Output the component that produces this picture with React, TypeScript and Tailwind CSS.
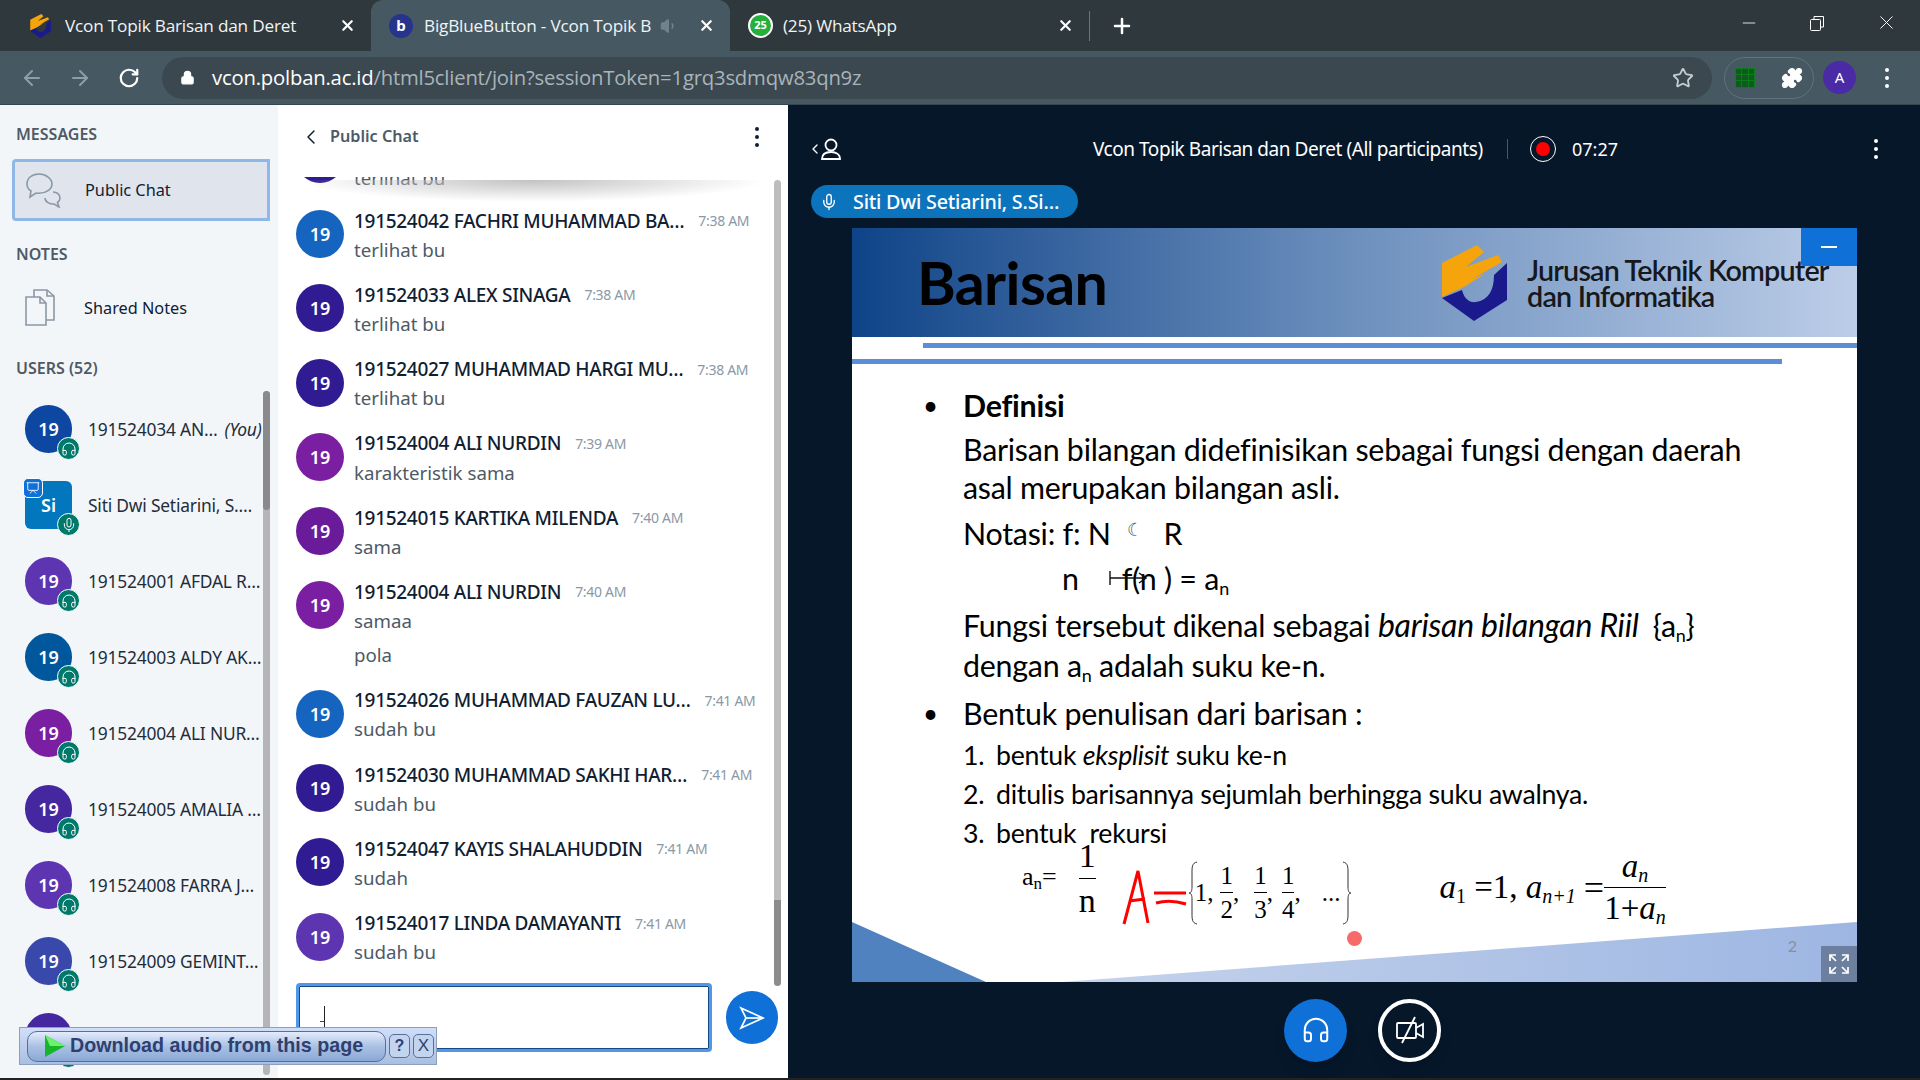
import { Headphones, Mic, Presentation, ChevronLeft, ArrowLeft, ArrowRight, RotateCw, Lock, Star, Puzzle, Plus, X, Minus, Volume1 } from "lucide-react";

const uiFont = "font-['Noto_Sans','Open_Sans',sans-serif]";

const users = [
  { name: "191524034 AN…", you: true, color: "bg-[#0d47a1]", mic: false, tag: "19" },
  { name: "Siti Dwi Setiarini, S.…", color: "bg-[#0277bd]", mic: true, tag: "Si", presenter: true },
  { name: "191524001 AFDAL R…", color: "bg-[#5e35b1]", tag: "19" },
  { name: "191524003 ALDY AK…", color: "bg-[#01579b]", tag: "19" },
  { name: "191524004 ALI NUR…", color: "bg-[#7b1fa2]", tag: "19" },
  { name: "191524005 AMALIA …", color: "bg-[#4527a0]", tag: "19" },
  { name: "191524008 FARRA J…", color: "bg-[#5e35b1]", tag: "19" },
  { name: "191524009 GEMINT…", color: "bg-[#3949ab]", tag: "19" },
  { name: "191524010 HANI…", color: "bg-[#4527a0]", tag: "19" },
];

const messages = [
  { name: "191524042 FACHRI MUHAMMAD BA…", time: "7:38 AM", color: "bg-[#1565c0]", lines: ["terlihat bu"] },
  { name: "191524033 ALEX SINAGA", time: "7:38 AM", color: "bg-[#311b92]", lines: ["terlihat bu"] },
  { name: "191524027 MUHAMMAD HARGI MU…", time: "7:38 AM", color: "bg-[#311b92]", lines: ["terlihat bu"] },
  { name: "191524004 ALI NURDIN", time: "7:39 AM", color: "bg-[#7b1fa2]", lines: ["karakteristik sama"] },
  { name: "191524015 KARTIKA MILENDA", time: "7:40 AM", color: "bg-[#6a1b9a]", lines: ["sama"] },
  { name: "191524004 ALI NURDIN", time: "7:40 AM", color: "bg-[#7b1fa2]", lines: ["samaa", "pola"] },
  { name: "191524026 MUHAMMAD FAUZAN LU…", time: "7:41 AM", color: "bg-[#1565c0]", lines: ["sudah bu"] },
  { name: "191524030 MUHAMMAD SAKHI HAR…", time: "7:41 AM", color: "bg-[#311b92]", lines: ["sudah bu"] },
  { name: "191524047 KAYIS SHALAHUDDIN", time: "7:41 AM", color: "bg-[#311b92]", lines: ["sudah"] },
  { name: "191524017 LINDA DAMAYANTI", time: "7:41 AM", color: "bg-[#5e35b1]", lines: ["sudah bu"] },
];

function JtkLogo({ className }: { className: string }) {
  return (
    <svg viewBox="0 0 65 76" className={className}>
      <path d="M0 18 L35 0 L42 7 L24 22 L56 10 L60 17 L30 34 L44 28 L22 42 L0 52 Z" fill="#f5a40c" />
      <path d="M0 53 L20 45 C22 54 28 58 34 57 C46 55 52 46 52 30 L65 18 L65 55 L32 76 Z" fill="#1a1a8c" />
    </svg>
  );
}

function Tab({ title, active, icon, speaker }: { title: string; active?: boolean; icon: React.ReactNode; speaker?: boolean }) {
  return (
    <div
      className={`relative flex h-[51px] w-[359px] items-center pl-[18px] pr-[15px] ${
        active ? "rounded-t-[12px] bg-[#465963]" : ""
      }`}
    >
      <div className="mr-[11px] w-[24px] shrink-0">{icon}</div>
      <span className="flex-1 overflow-hidden whitespace-nowrap text-[17.2px] text-[#f1f3f4] font-['Open_Sans',sans-serif] tracking-[-0.2px]">
        {title}
      </span>
      {speaker && <Volume1 size={18} className="mr-[12px] text-[#71828b]" fill="#71828b" />}
      <X size={17} strokeWidth={3} className="ml-2 text-white" />
    </div>
  );
}

function Avatar({ tag, color, mic, presenter }: { tag: string; color: string; mic?: boolean; presenter?: boolean }) {
  return (
    <div
      className={`relative flex h-[48px] w-[47px] shrink-0 items-center justify-center text-[18px] font-semibold text-white ${color} ${
        presenter ? "rounded-[6px]" : "rounded-full"
      }`}
    >
      {tag}
      {presenter && (
        <div className="absolute -left-[2px] -top-[3px] flex h-[20px] w-[20px] items-center justify-center rounded-[5px] border border-white bg-[#0f70d7]">
          <Presentation size={14} strokeWidth={1.5} />
        </div>
      )}
      <div className="absolute -bottom-[7px] -right-[8px] flex h-[23px] w-[23px] items-center justify-center rounded-full border-[1.5px] border-white bg-[#00796b]">
        {mic ? <Mic size={16} strokeWidth={1.5} /> : <Headphones size={16} strokeWidth={1.5} />}
      </div>
    </div>
  );
}

function Frac({ top, bottom, className, gap = "my-[3px]" }: { top: React.ReactNode; bottom: React.ReactNode; className?: string; gap?: string }) {
  return (
    <span className={`inline-flex flex-col items-center ${className ?? ""}`}>
      <span className="leading-none">{top}</span>
      <span className={`h-px w-full bg-black ${gap}`} />
      <span className="leading-none">{bottom}</span>
    </span>
  );
}

function Dots({ color }: { color: string }) {
  return (
    <div className="flex flex-col gap-[4px]">
      <div className={`h-[4px] w-[4px] rounded-full ${color}`} />
      <div className={`h-[4px] w-[4px] rounded-full ${color}`} />
      <div className={`h-[4px] w-[4px] rounded-full ${color}`} />
    </div>
  );
}

function Brace({ flip }: { flip?: boolean }) {
  return (
    <svg width="10" height="64" viewBox="0 0 10 64" fill="none" stroke="#333" strokeWidth="1" className={flip ? "-scale-x-100" : ""}>
      <path d="M9 1 C4 2 4 6 4 12 V26 C4 30 3 32 1 32 C3 32 4 34 4 38 V52 C4 58 4 62 9 63" />
    </svg>
  );
}

export default function App() {
  return (
    <div className="relative flex h-screen w-screen flex-col overflow-hidden bg-[#06172a]">
      {/* Tab strip */}
      <div className="flex h-[51px] shrink-0 items-center bg-[#2e383d]">
        <div className="flex w-[371px] shrink-0 items-center">
          <div className="w-[12px]" />
          <Tab title="Vcon Topik Barisan dan Deret" icon={<JtkLogo className="h-[24px] w-[21px]" />} />
        </div>
        <Tab
          active
          speaker
          title="BigBlueButton - Vcon Topik B"
          icon={
            <div className="flex h-[24px] w-[24px] items-center justify-center rounded-full bg-[#27348b] text-[15px] font-bold text-white">
              b
            </div>
          }
        />
        <Tab
          title="(25) WhatsApp"
          icon={
            <div className="flex h-[25px] w-[25px] items-center justify-center rounded-full border-[2px] border-white bg-[#25b03c] text-[11px] font-bold text-white">
              25
            </div>
          }
        />
        <div className="h-[30px] w-px bg-[#6b767c]" />
        <Plus size={24} strokeWidth={2.5} className="ml-[20px] text-white" />
        <div className="flex-1" />
        <div className="flex items-center gap-[49px] self-start pr-[22px] pt-[11px] text-white">
          <Minus size={20} strokeWidth={1} />
          <svg width="18" height="18" viewBox="0 0 18 18" fill="none" stroke="white">
            <rect x="2.5" y="5.5" width="10" height="11" rx="1" />
            <path d="M6 5V2.5h9.5V13H13" />
          </svg>
          <X size={23} strokeWidth={1} />
        </div>
      </div>

      {/* Toolbar */}
      <div className="flex h-[54px] shrink-0 items-center border-b border-[#37454c] bg-[#465963] pl-[20px] pr-[31px]">
        <ArrowLeft size={24} strokeWidth={2} className="text-[#8f9da4]" />
        <ArrowRight size={24} strokeWidth={2} className="ml-[24px] text-[#8f9da4]" />
        <RotateCw size={22} strokeWidth={2.4} className="ml-[26px] text-white" />
        <div className="ml-[22px] flex h-[42px] flex-1 items-center rounded-full bg-[#3b4850] pl-[18px] pr-[18px]">
          <Lock size={15} fill="white" className="text-white" />
          <span className="ml-[17px] text-[20.3px] tracking-[-0.2px] text-white font-['Open_Sans',sans-serif]">vcon.polban.ac.id</span>
          <span className="text-[20.3px] tracking-[-0.2px] text-[#a9b4ba] font-['Open_Sans',sans-serif]">/html5client/join?sessionToken=1grq3sdmqw83qn9z</span>
          <div className="flex-1" />
          <Star size={22} strokeWidth={2} className="text-[#c7ced2]" />
        </div>
        <div className="ml-[12px] flex h-[42px] w-[90px] items-center justify-between rounded-full border border-[#60727b] px-[10px]">
          <div className="grid h-[20px] w-[20px] grid-cols-3 gap-px bg-[#0a7d1c] p-px">
            {Array.from({ length: 9 }).map((_, i) => (
              <div key={i} className="bg-[#0f5a1d]" />
            ))}
          </div>
          <Puzzle size={22} fill="white" className="text-white" />
        </div>
        <div className="ml-[9px] flex h-[33px] w-[33px] items-center justify-center rounded-full bg-[#4b2aa5] text-[15px] text-white">
          A
        </div>
        <div className="ml-[29px]">
          <Dots color="bg-white" />
        </div>
      </div>

      <div className={`flex min-h-0 flex-1 ${uiFont}`}>
        {/* Sidebar */}
        <div className="relative flex w-[278px] shrink-0 flex-col overflow-hidden bg-[#f3f6f9]">
          <div className="pl-[16px] pt-[19px] text-[16px] font-semibold leading-[20px] text-[#4e5a66]">MESSAGES</div>
          <div className="ml-[12px] mt-[15px] flex h-[62px] w-[258px] items-center rounded-l-[4px] border-[3px] border-[#8fb8e8] bg-[#dfe4ed] pl-[10px]">
            <svg width="38" height="36" viewBox="0 0 38 36" fill="none" stroke="#8b98a5" strokeWidth="1.6" className="shrink-0">
              <path d="M14 2C7 2 2 6 2 12c0 3 1.500 5.500 4 7l-1 6 6-4c1 .2 2 .3 3 .3 7 0 13-4 13-9.300S21 2 14 2Z" />
              <path d="M28 20c4 0 7 2.500 7 6 0 2-1 3.500-2.500 4.500L34 35l-5-3c-4 .2-9-2-9-6" />
            </svg>
            <span className="ml-[22px] text-[16.3px] leading-none text-[#0f2032]">Public Chat</span>
          </div>
          <div className="pl-[16px] pt-[23px] text-[16px] font-semibold leading-[20px] text-[#4e5a66]">NOTES</div>
          <div className="-mt-px flex h-[72px] items-center pl-[25px] pt-[18px]">
            <svg width="30" height="38" viewBox="0 0 30 38" fill="none" stroke="#8b98a5" strokeWidth="1.6" className="shrink-0">
              <path d="M1 8h14l6 6v22H1Z" />
              <path d="M15 8v6h6" />
              <path d="M9 8V1h13l7 6v24h-8" />
              <path d="M22 1v6h7" />
            </svg>
            <span className="ml-[29px] text-[16.3px] leading-none text-[#0f2032]">Shared Notes</span>
          </div>
          <div className="pl-[16px] pt-[23px] text-[16px] font-semibold leading-[20px] text-[#4e5a66]">USERS (52)</div>
          <div className="mt-[27px] flex min-h-0 flex-1 flex-col gap-[28px] overflow-hidden pl-[25px]">
            {users.map((u) => (
              <div key={u.name} className="flex h-[48px] shrink-0 items-center">
                <Avatar tag={u.tag} color={u.color} mic={u.mic} presenter={u.presenter} />
                <div className="ml-[16px] flex w-[178px] overflow-hidden whitespace-nowrap text-[17.4px] tracking-[-0.2px] text-[#1f2d3a]">
                  <span>{u.name}</span>
                  {u.you && <span className="ml-[7px] italic">(You)</span>}
                </div>
              </div>
            ))}
          </div>
          {/* Scrollbar */}
          <div className="absolute bottom-[3px] left-[263px] top-[286px] w-[7px] rounded-full bg-[#b5b5b8]">
            <div className="h-[119px] rounded-full bg-[#8a8a8c]" />
          </div>
        </div>

        {/* Chat */}
        <div className="relative flex w-[510px] shrink-0 flex-col bg-white">
          <div className="flex h-[72px] shrink-0 items-center pb-[9px] pl-[21px] pr-[29px]">
            <ChevronLeft size={24} strokeWidth={1.5} className="text-[#0f2032]" />
            <span className="ml-[7px] flex-1 text-[16.2px] font-semibold text-[#4e5a66]">Public Chat</span>
            <Dots color="bg-[#0f2032]" />
          </div>
          <div className="relative min-h-0 flex-1 overflow-hidden">
            <div className="-mt-[55px] flex flex-col pl-[18px]">
              <div className="flex h-[75px] items-start pt-[13px]">
                <div className="flex h-[48px] w-[48px] items-center justify-center rounded-full bg-[#311b92] text-[18px] font-semibold text-white">19</div>
                <div className="ml-[10px] mt-[31px] text-[18.7px] leading-[24px] text-[#4e5a66]">terlihat bu</div>
              </div>
              {messages.map((m, i) => (
                <div key={i} className="flex items-start pb-[9.3px] pt-[13px] leading-none">
                  <div className={`flex h-[48px] w-[48px] shrink-0 items-center justify-center rounded-full text-[18px] font-semibold text-white ${m.color}`}>
                    19
                  </div>
                  <div className="-mt-[1px] ml-[10px] flex flex-col">
                    <div className="flex h-[24px] items-center whitespace-nowrap">
                      <span className="text-[19px] font-medium tracking-[-0.3px] text-[#0f2032]">{m.name}</span>
                      <span className="ml-[14px] text-[14px] tracking-[-0.3px] text-[#8b98a5]">{m.time}</span>
                    </div>
                    {m.lines.map((l, j) => (
                      <div key={l} className={`flex h-[24px] items-center text-[18.7px] text-[#4e5a66] ${j > 0 ? "mt-[10px]" : "mt-[5px]"}`}>
                        {l}
                      </div>
                    ))}
                  </div>
                </div>
              ))}
            </div>
            {/* Scroll fade under the header */}
            <div className="absolute left-[20px] right-[20px] top-[3px] h-[22px] bg-[radial-gradient(ellipse_at_top,#c2c2c2,transparent_70%)]" />
          </div>
          <div className="flex h-[100px] shrink-0 items-start pl-[18px] pt-[5px]">
            <div className="flex h-[69px] w-[416px] items-center rounded-[4px] border-[3px] border-[#4f97e8] bg-white outline outline-1 -outline-offset-4 outline-[#174a80]">
              <div className="ml-[21px] mt-[8px] h-px w-[4px] bg-[#444]" />
              <div className="mt-[2px] h-[26px] w-px bg-[#222]" />
            </div>
            <div className="ml-[14px] mt-[8px] flex h-[53px] w-[52px] items-center justify-center rounded-full bg-[#0f70d7]">
              <svg width="26" height="24" viewBox="0 0 26 24" fill="none" stroke="white" strokeWidth="1.7">
                <path d="M2 2 L24 12 L2 22 L7 12 Z" />
                <path d="M7 12h17" />
              </svg>
            </div>
          </div>
          {/* Scrollbar */}
          <div className="absolute left-[496px] top-[75px] w-[7px]">
            <div className="h-[720px] rounded-t-full bg-[#bdbdbd]" />
            <div className="h-[86px] rounded-b-full bg-[#8c8c8c]" />
          </div>
        </div>

        {/* Presentation */}
        <div className="relative flex min-w-0 flex-1 flex-col bg-[#06172a]">
          <div className="flex h-[80px] shrink-0 items-center pt-[8px] text-white">
            <div className="ml-[19px] flex items-center">
              <ChevronLeft size={16} strokeWidth={2} className="-mr-[3px]" />
              <svg width="22" height="24" viewBox="0 0 22 24" fill="none" stroke="white" strokeWidth="1.8">
                <circle cx="11" cy="8" r="5.500" />
                <path d="M2 22c0-5 4-7 9-7s9 2 9 7Z" />
              </svg>
            </div>
            <span className="ml-[251px] w-[390px] whitespace-nowrap text-[19px] tracking-[-0.45px]">
              Vcon Topik Barisan dan Deret (All participants)
            </span>
            <div className="ml-[24px] h-[20px] w-px bg-[#4a5764]" />
            <div className="ml-[22px] flex h-[26px] w-[26px] items-center justify-center rounded-full border-[1.5px] border-white">
              <div className="h-[14px] w-[14px] rounded-full bg-[#f00]" />
            </div>
            <span className="ml-[16px] text-[18px]">07:27</span>
            <div className="ml-[256px]">
              <Dots color="bg-white" />
            </div>
          </div>
          <div className="ml-[23px] flex h-[33px] w-[267px] items-center rounded-full bg-[#0c74bd] pl-[9px] text-[19.7px] font-medium tracking-[-0.2px] text-white">
            <Mic size={18} strokeWidth={1.8} className="shrink-0" />
            <span className="ml-[15px] whitespace-nowrap">Siti Dwi Setiarini, S.Si…</span>
          </div>

          {/* Slide */}
          <div className="relative ml-[64px] mt-[10px] h-[754px] w-[1005px] shrink-0 overflow-hidden bg-white text-black font-['Lato','Open_Sans',sans-serif]">
            <div className="flex h-[109px] items-center bg-gradient-to-r from-[#0c4488] via-[#6d90bd] to-[#bccde8] pl-[65px]">
              <span className="w-[189px] text-[59px] font-bold leading-none tracking-[-0.6px]">Barisan</span>
              <JtkLogo className="ml-[336px] h-[76px] w-[65px]" />
              <div className="ml-[20px] whitespace-nowrap text-[28.7px] font-semibold leading-[26px] tracking-[-0.8px] text-[#15181d]">
                <div>Jurusan Teknik Komputer</div>
                <div>dan Informatika</div>
              </div>
            </div>
            <div className="ml-[71px] mt-[6px] h-[5px] bg-[#5a8fd6]" />
            <div className="mt-[11px] h-[5px] w-[930px] bg-[#5a8fd6]" />

            <div className="relative pl-[111px] pt-[21px] text-[30.4px] leading-[38px] tracking-[-0.25px]">
              <div className="flex h-[40px] items-center font-bold">
                <span className="absolute left-[71px] text-[26px] font-normal">•</span>Definisi
              </div>
              <div className="mt-[5px]">Barisan bilangan didefinisikan sebagai fungsi dengan daerah</div>
              <div>asal merupakan bilangan asli.</div>
              <div className="mt-[8px] flex">
                <span>Notasi: f: N</span>
                <span className="ml-[16px] -mt-[4px] text-[18px] text-[#555]">☾</span>
                <span className="ml-[21px]">R</span>
              </div>
              <div className="relative mt-[7px] pl-[99px]">
                n
                <span className="ml-[43px]">
                  f(n ) = a<sub className="text-[18px] leading-none">n</sub>
                </span>
                <svg width="38" height="16" viewBox="0 0 38 16" fill="none" stroke="#111" strokeWidth="1.4" className="absolute left-[146px] top-[11px]">
                  <path d="M1 1 V15 M1 8 H36 M30 3 L37 8 L30 13" />
                </svg>
              </div>
              <div className="mt-[9px]">
                Fungsi tersebut dikenal sebagai <i className="text-[32px]">barisan bilangan Riil</i>
                <span className="ml-[14px]">{"{"}a<sub className="text-[18px] leading-none">n</sub>{"}"}</span>
              </div>
              <div className="mt-[2px]">
                dengan a<sub className="text-[18px] leading-none">n</sub> adalah suku ke-n.
              </div>
              <div className="mt-[10px] flex items-center">
                <span className="absolute left-[71px] text-[26px]">•</span>Bentuk penulisan dari barisan :
              </div>
              <div className="text-[26.7px] leading-[39px]">
                <div className="mt-[4px] flex"><span className="w-[33px]">1.</span><span>bentuk <i>eksplisit</i> suku ke-n</span></div>
                <div className="flex"><span className="w-[33px]">2.</span><span>ditulis barisannya sejumlah berhingga suku awalnya.</span></div>
                <div className="flex"><span className="w-[33px]">3.</span><span>bentuk&nbsp; rekursi</span></div>
              </div>
            </div>

            {/* Formula row */}
            <div className="-mt-[6px] flex h-[76px] items-center pl-[170px] text-[26px] font-['Liberation_Serif',serif]">
              <span className="-mt-[17px]">a<sub className="text-[17px] leading-none">n</sub>=</span>
              <Frac className="ml-[22px] -mt-[14px] text-[34px]" gap="my-[5px]" top="1" bottom="n" />
              <svg width="66" height="56" viewBox="0 0 66 56" fill="none" stroke="#f00" strokeWidth="3" className="ml-[26px] mt-[24px]">
                <path d="M2 55 L16 2 L26 54 M7 32 L23 30" />
                <path d="M32 24 H64 M34 34 Q48 30 64 35" />
              </svg>
              <span className="mt-[15px] flex items-center text-[25px]">
                <Brace />
                <span className="-ml-[3px]">1,</span>
                <Frac className="ml-[7px]" gap="my-[4px]" top="1" bottom="2" />,
                <Frac className="ml-[15px]" gap="my-[4px]" top="1" bottom="3" />,
                <Frac className="ml-[9px]" gap="my-[4px]" top="1" bottom="4" />,
                <span className="ml-[21px]">...</span>
                <span className="ml-[2px]"><Brace flip /></span>
              </span>
              <span className="ml-[87px] mt-[6px] whitespace-nowrap text-[33px] italic">
                a<sub className="text-[20px] leading-none not-italic">1</sub> <span className="not-italic">=1,</span> a<sub className="text-[20px] leading-none">n+1</sub>
              </span>
              <span className="ml-[8px] mt-[6px] text-[36px]">=</span>
              <Frac
                className="mt-[4px] text-[33px]"
                gap="my-[4px]"
                top={<i>a<sub className="text-[20px] leading-none">n</sub></i>}
                bottom={<span>1+<i>a<sub className="text-[20px] leading-none">n</sub></i></span>}
              />
            </div>

            {/* Bottom corner shapes */}
            <svg viewBox="0 0 1005 60" className="absolute bottom-0 left-0 h-[60px] w-[1005px]">
              <defs>
                <linearGradient id="wedge" x1="0" x2="1" y1="0" y2="0">
                  <stop offset="0" stopColor="#c5d3ec" />
                  <stop offset="1" stopColor="#9db6e2" />
                </linearGradient>
              </defs>
              <path d="M0 0 L134 60 L0 60 Z" fill="#5082bf" />
              <path d="M210 60 L1005 0 L1005 60 Z" fill="url(#wedge)" />
            </svg>
            <span className="absolute bottom-[24px] right-[60px] text-[16px] text-[#8a8f98]">2</span>
            <div className="absolute bottom-[36px] left-[495px] h-[15px] w-[15px] rounded-full bg-[#f66a6a]" />
            <div className="absolute bottom-0 right-0 flex h-[36px] w-[36px] items-center justify-center bg-[#6d7f9f] text-white">
              <svg width="22" height="22" viewBox="0 0 22 22" fill="none" stroke="white" strokeWidth="1.7">
                <path d="M2 8V2h6M2 2l6 6M20 8V2h-6M20 2l-6 6M2 14v6h6M2 20l6-6M20 14v6h-6M20 20l-6-6" />
              </svg>
            </div>
            <div className="absolute right-0 top-0 flex h-[38px] w-[56px] items-center justify-center rounded-bl-[2px] bg-[#0f70d7]">
              <div className="h-[2px] w-[16px] bg-white" />
            </div>
          </div>

          {/* Action bar */}
          <div className="flex flex-1 items-center justify-center gap-[31px] pl-[17px]">
            <div className="flex h-[63px] w-[63px] items-center justify-center rounded-full bg-[#0f70d7] text-white shadow-lg">
              <Headphones size={30} strokeWidth={1.6} />
            </div>
            <div className="flex h-[63px] w-[63px] items-center justify-center rounded-full border-[4px] border-white text-white shadow-lg">
              <svg width="30" height="28" viewBox="0 0 30 28" fill="none" stroke="white" strokeWidth="1.8">
                <rect x="2" y="7" width="19" height="15" rx="1" />
                <path d="M21 12 L28 8 V21 L21 17" />
                <path d="M20 1 L7 27" />
              </svg>
            </div>
          </div>
        </div>
      </div>
      <div className="h-[2px] shrink-0 bg-[#222]" />

      {/* Download helper toolbar */}
      <div className="absolute left-[19px] top-[1027px] flex h-[38px] w-[418px] items-center gap-[3px] border border-[#8d9fc0] bg-gradient-to-b from-[#d0defa] to-[#a9bfe0] pl-[7px] font-['Liberation_Sans',sans-serif]">
        <div className="flex h-[31px] w-[359px] items-center rounded-[10px] border border-[#5a6f96] bg-gradient-to-b from-[#e3ecfa] via-[#aac1e4] to-[#8ba8d6] pl-[16px]">
          <svg width="22" height="24" viewBox="0 0 22 24" className="shrink-0">
            <path d="M1 1 L21 12 L1 23 Z" fill="#17b52a" />
            <path d="M1 1 L21 12 L6 12 Z" fill="#6cf26a" />
          </svg>
          <span className="ml-[4px] whitespace-nowrap text-[19.7px] font-bold text-[#2f3f70]">Download audio from this page</span>
        </div>
        <div className="flex h-[24px] w-[21px] items-center justify-center rounded-[5px] border border-[#5a6f96] bg-[#c3d4ee] text-[16px] font-bold text-[#2f3f70]">?</div>
        <div className="flex h-[24px] w-[21px] items-center justify-center rounded-[5px] border border-[#5a6f96] bg-[#c3d4ee] text-[17px] text-[#2f3f70]">X</div>
      </div>
    </div>
  );
}
